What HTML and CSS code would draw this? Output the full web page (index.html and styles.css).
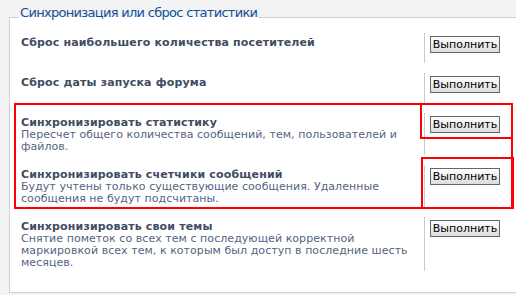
FILE: index.html
```html
<!DOCTYPE html>
<html lang="ru">
<head>
<meta charset="utf-8">
<title>Синхронизация или сброс статистики</title>
<link rel="stylesheet" href="styles.css">
</head>
<body>
<fieldset class="panel">
  <legend class="panel-title">Синхронизация или сброс статистики</legend>
  <div class="row">
    <div class="row-text">
      <span class="row-label">Сброс наибольшего количества посетителей</span>
      <span class="row-explain"></span>
    </div>
    <div class="row-action"><button class="btn" type="button">Выполнить</button></div>
  </div>
  <div class="row">
    <div class="row-text">
      <span class="row-label">Сброс даты запуска форума</span>
      <span class="row-explain"></span>
    </div>
    <div class="row-action"><button class="btn" type="button">Выполнить</button></div>
  </div>
  <div class="row">
    <div class="row-text">
      <span class="row-label">Синхронизировать статистику</span>
      <span class="row-explain">Пересчет общего количества сообщений, тем, пользователей и файлов.</span>
    </div>
    <div class="row-action"><button class="btn" type="button">Выполнить</button></div>
  </div>
  <div class="row">
    <div class="row-text">
      <span class="row-label">Синхронизировать счетчики сообщений</span>
      <span class="row-explain">Будут учтены только существующие сообщения. Удаленные сообщения не будут подсчитаны.</span>
    </div>
    <div class="row-action"><button class="btn" type="button">Выполнить</button></div>
  </div>
  <div class="row">
    <div class="row-text">
      <span class="row-label">Синхронизировать свои темы</span>
      <span class="row-explain">Снятие пометок со всех тем с последующей корректной маркировкой всех тем, к которым был доступ в последние шесть месяцев.</span>
    </div>
    <div class="row-action"><button class="btn" type="button">Выполнить</button></div>
  </div>
</fieldset>
<div class="mark mark-main"></div>
<div class="mark mark-btn-a"></div>
<div class="mark mark-btn-b"></div>
</body>
</html>
```
FILE: styles.css
```css
html, body {
  margin: 0;
  padding: 0;
}
body {
  background: #f3f3f3;
  width: 516px;
  height: 295px;
  overflow: hidden;
  position: relative;
  font-family: "DejaVu Sans", Verdana, sans-serif;
  font-size: 11px;
}
.panel {
  margin: 2px 0 0 9px;
  padding: 0 0 21px 11px;
  width: 560px;
  border: 1px solid #d0d0d0;
  background: #ffffff;
  min-width: 0;
}
.panel-title {
  margin-left: -2px;
  padding: 3px 1px 12px;
  font-size: 13px;
  letter-spacing: -0.7px;
  line-height: 16px;
  color: #115098;
  font-weight: normal;
}
.row {
  display: grid;
  grid-template-columns: 403px 1fr;
  margin-bottom: 10px;
}
.row:last-child {
  margin-bottom: 0;
}
.row-text {
  padding: 4px 3px 2px 0;
  line-height: 12px;
}
.row-label {
  display: block;
  font-weight: bold;
  letter-spacing: 0.15px;
  color: #3f4c63;
}
.row-explain {
  display: block;
  min-height: 12px;
  letter-spacing: 0.05px;
  color: #536482;
}
.row-action {
  border-left: 1px solid #cccccc;
  padding: 3px 0 0 5px;
}
.btn {
  display: block;
  width: 70px;
  height: 17px;
  padding: 0;
  margin: 0;
  border: 1px solid #666666;
  background: linear-gradient(#ffffff, #dcdcdc);
  font-family: "DejaVu Sans", Verdana, sans-serif;
  font-size: 11px;
  line-height: 15px;
  color: #000000;
}
.mark {
  position: absolute;
  box-sizing: border-box;
  border: 2px solid #ff0000;
}
.mark-main {
  left: 14px;
  top: 103px;
  width: 499px;
  height: 106px;
}
.mark-btn-a {
  left: 420px;
  top: 103px;
  width: 93px;
  height: 36px;
}
.mark-btn-b {
  left: 421px;
  top: 157px;
  width: 93px;
  height: 52px;
}
```
